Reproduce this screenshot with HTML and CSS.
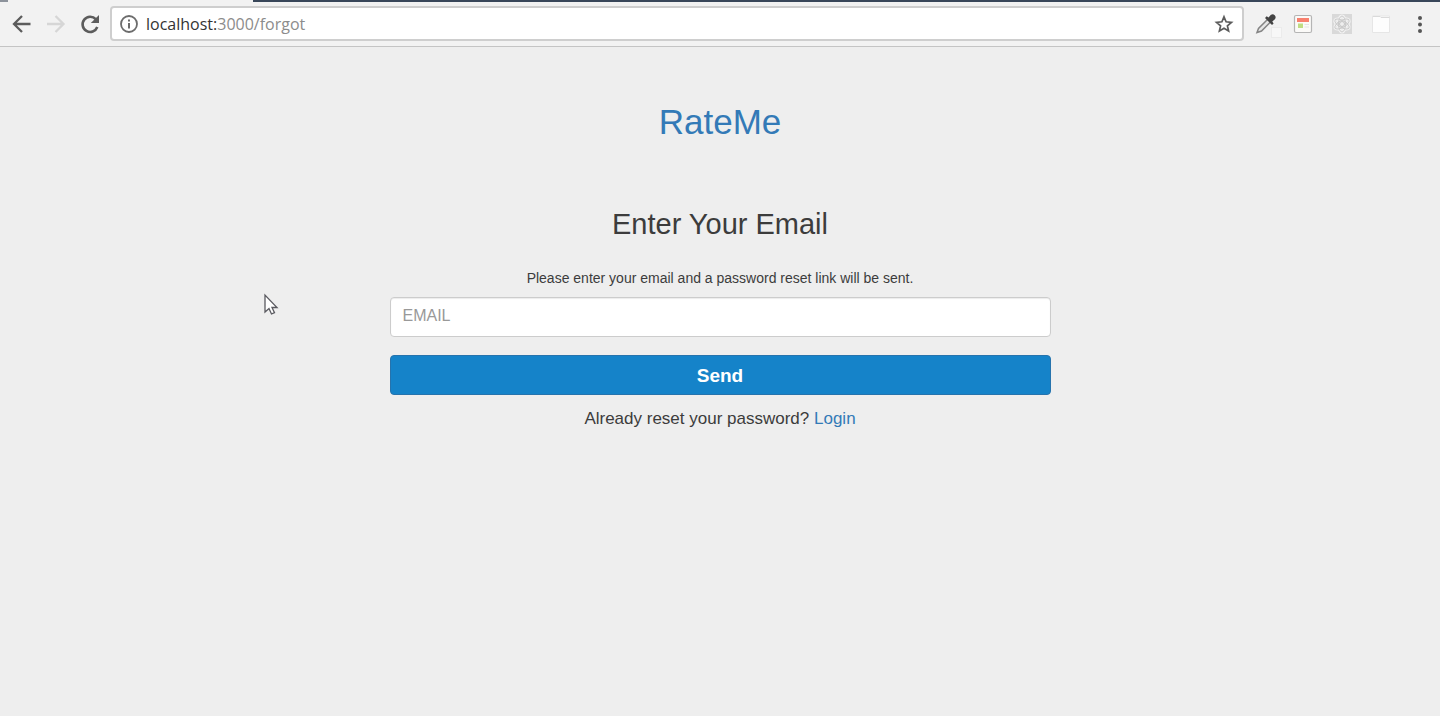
FILE: index.html
```html
<!DOCTYPE html>
<html lang="en">
<head>
<meta charset="utf-8">
<title>RateMe</title>
<link rel="stylesheet" href="styles.css">
</head>
<body>
<header class="browser">
  <div class="tab-strip"><span class="tab-strip-start"></span><span class="active-tab"></span><span class="tab-strip-rest"></span></div>
  <div class="toolbar">
    <nav class="nav-buttons">
      <button class="icon-button" type="button" aria-label="Back">
        <svg width="22" height="22" viewBox="0 0 22 22" fill="none" stroke="#5c5c5c" stroke-width="2.3"><path d="M20.500 11H4M12 3l-8 8 8 8"/></svg>
      </button>
      <button class="icon-button" type="button" aria-label="Forward" disabled>
        <svg width="22" height="22" viewBox="0 0 22 22" fill="none" stroke="#d6d6d6" stroke-width="2.3"><path d="M3 11h16M11.500 3l8 8-8 8"/></svg>
      </button>
      <button class="icon-button" type="button" aria-label="Reload">
        <svg width="22" height="22" viewBox="0 0 22 22"><path d="M17.800 6.200A7.600 7.600 0 1 0 19.300 14" fill="none" stroke="#5c5c5c" stroke-width="2.600"/><path d="M21 2V10h-8.200z" fill="#5c5c5c"/></svg>
      </button>
    </nav>
    <div class="address-bar">
      <svg class="info" width="20" height="20" viewBox="0 0 20 20"><circle cx="10" cy="10" r="8" fill="none" stroke="#6c6c6c" stroke-width="1.800"/><path d="M9 9h2v5.500H9zM9 5.500h2v2H9z" fill="#6c6c6c"/></svg>
      <div class="url">localhost:<span class="url-path">3000/forgot</span></div>
      <button class="icon-button star" type="button" aria-label="Bookmark this page">
        <svg width="20" height="20" viewBox="0 0 20 20" fill="none" stroke="#5c5c5c" stroke-width="1.700"><path d="M10 2.800l2.100 5 5.400.5-4.100 3.500 1.200 5.300-4.600-2.800-4.600 2.800 1.200-5.300-4.100-3.500 5.400-.5z"/></svg>
      </button>
    </div>
    <div class="extensions">
      <button class="icon-button" type="button" aria-label="Color picker">
        <svg width="28" height="30" viewBox="0 0 28 30"><rect x="17.500" y="18.500" width="10" height="10" fill="#f7f7f7" stroke="#ebebeb"/><path d="M13.500 10.500L4.500 19.500 3 23.500l4.500-1.500 9-9" fill="#e6e6e6" stroke="#858585" stroke-width="1.500"/><path d="M11 9l1.700-1.700 1.800 1.300 2.200-2.600q2.200-1.600 4 .2 1.800 2 .2 4l-2.600 2.400 1.300 1.800L18 16z" fill="#444"/></svg>
      </button>
      <button class="icon-button" type="button" aria-label="News extension">
        <svg width="20" height="20" viewBox="0 0 20 20"><rect x="1.500" y="1.500" width="17" height="17" rx="1.500" fill="#fbfaf8" stroke="#b5b5b5" stroke-width="1.200"/><path fill="#f8806e" d="M4 4h12v4H4z"/><path fill="#bfdc82" d="M5 9.500h5V14H5z"/><path d="M11.500 10.500H16M11.500 13H16" stroke="#e4e4e4"/></svg>
      </button>
      <button class="icon-button" type="button" aria-label="React developer tools">
        <svg width="20" height="20" viewBox="0 0 20 20" fill="none" stroke="#cacaca"><path d="M0 0h20v20H0z" fill="#d9d9d9" stroke="none"/><g stroke="#f3f3f3" stroke-width="3"><ellipse cx="10" cy="10" rx="3.500" ry="8"/><ellipse cx="10" cy="10" rx="3.500" ry="8" transform="rotate(60 10 10)"/><ellipse cx="10" cy="10" rx="3.500" ry="8" transform="rotate(120 10 10)"/></g><ellipse cx="10" cy="10" rx="3.500" ry="8"/><ellipse cx="10" cy="10" rx="3.500" ry="8" transform="rotate(60 10 10)"/><ellipse cx="10" cy="10" rx="3.500" ry="8" transform="rotate(120 10 10)"/><circle cx="10" cy="10" r="2.500" fill="#eee" stroke="#c4c4c4"/></svg>
      </button>
      <button class="icon-button" type="button" aria-label="Blank extension">
        <svg width="20" height="20" viewBox="0 0 20 20"><path d="M1.500 2h17v16.500h-17z" fill="#fdfdfd" stroke="#e6e6e6"/><path d="M2 2.500h7l1 1h8.500" stroke="#dadada" fill="none"/></svg>
      </button>
      <button class="icon-button" type="button" aria-label="Menu">
        <svg width="20" height="20" viewBox="0 0 20 20" fill="#555"><circle cx="10" cy="4" r="2"/><circle cx="10" cy="10.500" r="2"/><circle cx="10" cy="17" r="2"/></svg>
      </button>
    </div>
  </div>
</header>
<main class="page">
  <h1 class="brand"><a class="link" href="#">RateMe</a></h1>
  <form class="reset-form">
    <h2 class="form-title">Enter Your Email</h2>
    <label class="hint" for="email">Please enter your email and a password reset link will be sent.</label>
    <input class="email" id="email" type="email" placeholder="EMAIL">
    <button class="send" type="button">Send</button>
    <p class="login">Already reset your password? <a class="link" href="#">Login</a></p>
  </form>
</main>
<svg class="pointer" width="16" height="24" viewBox="0 0 16 24"><path d="M2 2v17l4-3.500L8.500 21l3-1.300L9 14.500h5z" fill="#fff" stroke="#5a5a60" stroke-width="1.300"/></svg>
</body>
</html>
```
FILE: styles.css
```css
* {
  box-sizing: border-box;
}

body {
  margin: 0;
  min-height: 100vh;
  background: #eee;
  color: #3c3c3c;
  font-family: "Liberation Sans", Arial, sans-serif;
}

.browser {
  background: #f2f2f2;
  border-bottom: 1px solid #c4c4c4;
}

.tab-strip {
  display: flex;
  height: 2px;
}

.tab-strip-start {
  width: 8px;
  background: #8d939c;
}

.active-tab {
  width: 245px;
}

.tab-strip-rest {
  flex: 1;
  background: #39475a;
}

.toolbar {
  display: flex;
  align-items: center;
  gap: 10px;
  padding: 4px 10px 5px;
}

.nav-buttons {
  display: flex;
  gap: 12px;
}

.icon-button {
  display: flex;
  padding: 0;
  border: 0;
  background: none;
}

.address-bar {
  display: flex;
  flex: 1;
  align-items: center;
  gap: 7px;
  height: 35px;
  padding: 0 8px 0 7px;
  background: #fff;
  border: 2px solid #cecece;
  border-radius: 4px;
}

.url {
  flex: 1;
  color: #333;
  font-family: "Open Sans", "Noto Sans", sans-serif;
  font-size: 16px;
  line-height: 24px;
}

.url-path {
  color: #8c8c8c;
}

.extensions {
  display: flex;
  align-items: center;
  gap: 19px;
}

.extensions .icon-button:first-child {
  margin-right: -8px;
}

.page {
  padding: 55px 16px;
  text-align: center;
}

.link {
  color: #337ab7;
  text-decoration: none;
}

.brand {
  margin: 0;
  font-size: 35px;
  font-weight: 400;
  line-height: 40px;
}

.reset-form {
  display: flex;
  flex-direction: column;
  max-width: 661px;
  margin: 64px auto 0;
}

.form-title {
  margin: 0 0 26px;
  font-size: 29px;
  font-weight: 400;
  line-height: 36px;
}

.hint {
  margin-bottom: 9px;
  font-size: 14px;
  line-height: 20px;
}

.email {
  height: 40px;
  padding: 0 12px 2px;
  background: #fff;
  border: 1px solid #ccc;
  border-radius: 4px;
  box-shadow: inset 0 1px 1px rgba(0, 0, 0, 0.08);
  color: #555;
  font: 16px "Liberation Sans", Arial, sans-serif;
}

.email::placeholder {
  color: #999;
}

.send {
  height: 40px;
  margin-top: 18px;
  padding: 2px 12px 0;
  background: #1583c9;
  border: 1px solid #2673ad;
  border-radius: 4px;
  color: #fff;
  font: bold 19px "Liberation Sans", Arial, sans-serif;
}

.login {
  margin: 12px 0 0;
  font-size: 17px;
  line-height: 24px;
}

.pointer {
  position: absolute;
  top: 293px;
  left: 263px;
}
```
